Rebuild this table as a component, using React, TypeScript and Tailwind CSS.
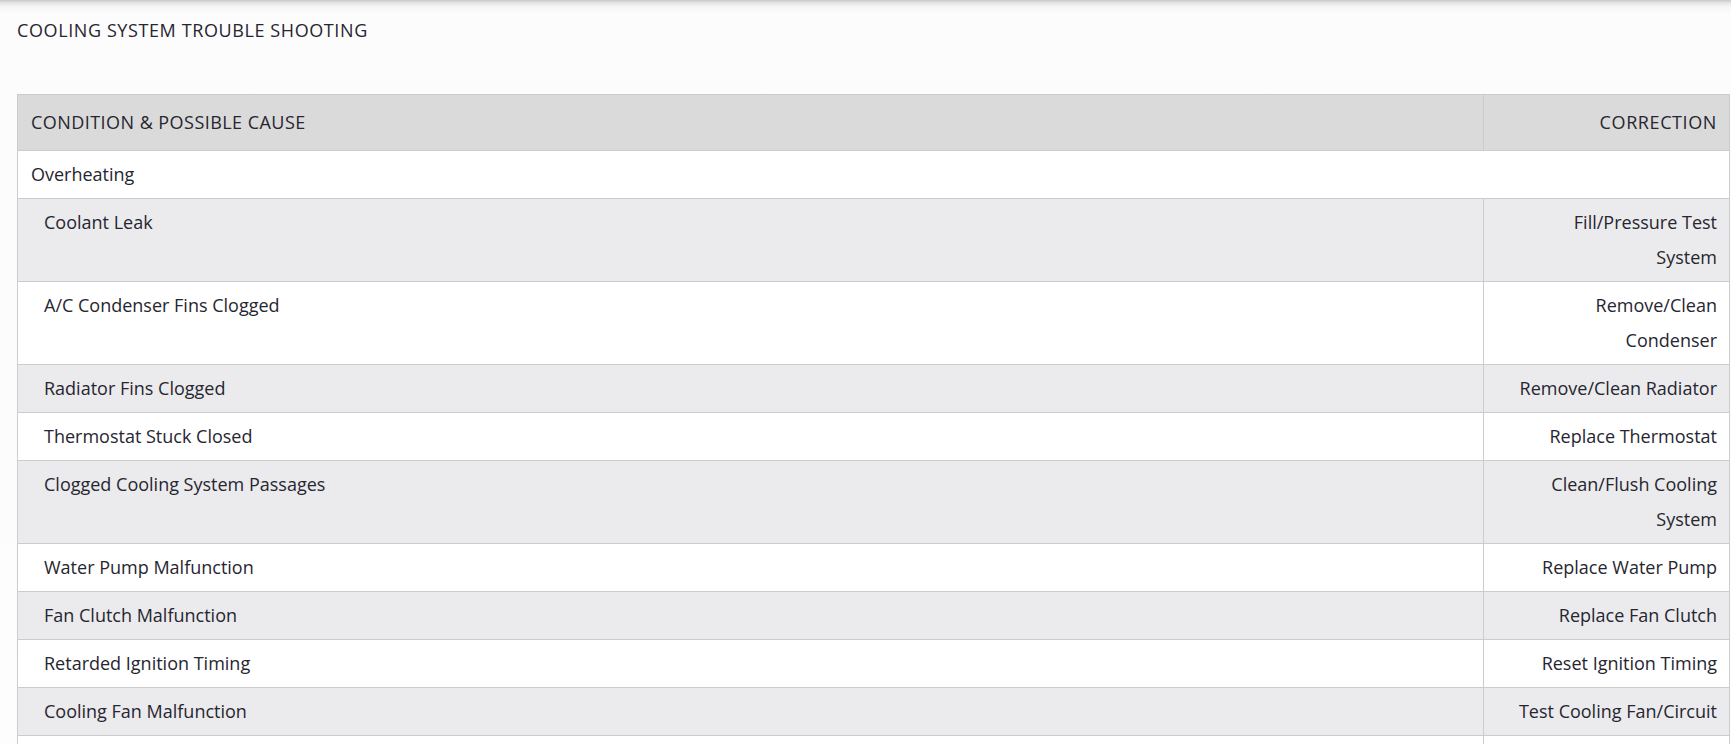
const rows: { cause: string; fix: string }[] = [
  { cause: "Coolant Leak", fix: "Fill/Pressure Test System" },
  { cause: "A/C Condenser Fins Clogged", fix: "Remove/Clean Condenser" },
  { cause: "Radiator Fins Clogged", fix: "Remove/Clean Radiator" },
  { cause: "Thermostat Stuck Closed", fix: "Replace Thermostat" },
  { cause: "Clogged Cooling System Passages", fix: "Clean/Flush Cooling System" },
  { cause: "Water Pump Malfunction", fix: "Replace Water Pump" },
  { cause: "Fan Clutch Malfunction", fix: "Replace Fan Clutch" },
  { cause: "Retarded Ignition Timing", fix: "Reset Ignition Timing" },
  { cause: "Cooling Fan Malfunction", fix: "Test Cooling Fan/Circuit" },
];

export default function App() {
  return (
    <div className="min-h-screen bg-[linear-gradient(to_bottom,#c9c9c9_0px,#e6e6e6_3px,#f6f6f6_7px,#fcfcfc_14px,#fdfdfd_100%)] pl-[17px] pr-[1px] pt-[18px] font-['Open_Sans',sans-serif] text-[#262630]">
      <h1 className="text-[18px] leading-[24px] font-normal tracking-[0.6px]">COOLING SYSTEM TROUBLE SHOOTING</h1>

      <table className="mt-[52px] w-full table-fixed border-collapse text-[18px] leading-[35px]">
        <colgroup>
          <col />
          <col className="w-[246px]" />
        </colgroup>
        <thead>
          <tr className="bg-[#dadada]">
            <th className="border border-[#cccccc] px-[13px] py-[10px] text-left font-normal tracking-[0.45px]">
              CONDITION &amp; POSSIBLE CAUSE
            </th>
            <th className="border border-[#cccccc] py-[10px] pl-[30px] pr-[12px] text-right font-normal tracking-[0.6px]">
              CORRECTION
            </th>
          </tr>
        </thead>
        <tbody>
          <tr className="bg-white">
            <td colSpan={2} className="border border-[#cccccc] px-[13px] py-[6px] align-top">
              Overheating
            </td>
          </tr>
          {rows.map((r, i) => (
            <tr key={r.cause} className={i % 2 === 0 ? "bg-[#ebebed]" : "bg-white"}>
              <td className="border border-[#cccccc] py-[6px] pl-[26px] pr-[13px] align-top">{r.cause}</td>
              <td className="border border-[#cccccc] py-[6px] pl-[30px] pr-[12px] text-right align-top">{r.fix}</td>
            </tr>
          ))}
          <tr className="bg-white">
            <td className="border border-[#cccccc] py-[6px] pl-[26px] pr-[13px]">&nbsp;</td>
            <td className="border border-[#cccccc] py-[6px] pl-[30px] pr-[12px]">&nbsp;</td>
          </tr>
        </tbody>
      </table>
    </div>
  );
}
